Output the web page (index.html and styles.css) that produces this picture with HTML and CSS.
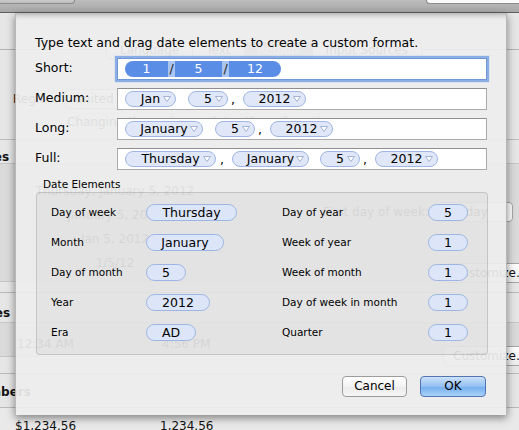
FILE: index.html
```html
<!DOCTYPE html>
<html>
<head>
<meta charset="utf-8">
<link rel="stylesheet" href="styles.css">
</head>
<body>
<div class="window">
  <div class="toolbar">
    <div class="tb-btn"></div>
    <div class="tb-search"></div>
  </div>
  <div class="pane">
    <div class="top">
      <div class="tabs">
        <span class="tab">Language</span><span class="tab">Text</span><span class="tab sel">Region</span><span class="tab">Input Sources</span>
      </div>
      <div class="region-row"><span>Region:</span><span class="popup">United States</span><span class="chk">Show all regions</span></div>
      <div class="note">Changing the region updates these formats.</div>
    </div>
    <div class="sec sec-dates">
      <div class="sec-title">Dates</div>
      <div class="sec-box dates-box">
        <div class="samples">
          <div>Thursday, January 5, 2012</div>
          <div>January 5, 2012</div>
          <div>Jan 5, 2012</div>
          <div>1/5/12</div>
        </div>
        <div class="side">
          <div class="fdw">First day of week: <span class="popup sm">Sunday</span></div>
          <div class="cbtn">Customize…</div>
        </div>
      </div>
    </div>
    <div class="sec sec-times">
      <div class="sec-title">Times</div>
      <div class="sec-box times-box">
        <span class="v1">12:34 AM</span><span class="v2">4:56 PM</span>
        <div class="cbtn cbtn2">Customize…</div>
      </div>
    </div>
    <div class="sec sec-numbers">
      <div class="sec-title">Numbers</div>
      <div class="sec-box num-box">
        <span class="n1">$1,234.56</span><span class="n2">1,234.56</span>
      </div>
    </div>
  </div>
</div>

<div class="sheet">
  <p class="intro">Type text and drag date elements to create a custom format.</p>
  <div class="formats">
    <span class="flabel">Short:</span>
    <div class="field focus">
      <div class="tokbar">
        <span class="seg s1">1</span><span class="slash">/</span><span class="seg s2">5</span><span class="slash">/</span><span class="seg s3">12</span>
      </div>
    </div>

    <span class="flabel">Medium:</span>
    <div class="field">
      <span class="tok w51">Jan<svg class="tri" viewBox="0 0 8 6"><path d="M0.5 0.5 H7.5 L4 5.5 Z"/></svg></span>
      <span class="sp"></span>
      <span class="tok w40">5<svg class="tri" viewBox="0 0 8 6"><path d="M0.5 0.5 H7.5 L4 5.5 Z"/></svg></span>
      <span class="cm">,</span>
      <span class="tok w63">2012<svg class="tri" viewBox="0 0 8 6"><path d="M0.5 0.5 H7.5 L4 5.5 Z"/></svg></span>
    </div>

    <span class="flabel">Long:</span>
    <div class="field">
      <span class="tok w78">January<svg class="tri" viewBox="0 0 8 6"><path d="M0.5 0.5 H7.5 L4 5.5 Z"/></svg></span>
      <span class="sp"></span>
      <span class="tok w40">5<svg class="tri" viewBox="0 0 8 6"><path d="M0.5 0.5 H7.5 L4 5.5 Z"/></svg></span>
      <span class="cm">,</span>
      <span class="tok w63">2012<svg class="tri" viewBox="0 0 8 6"><path d="M0.5 0.5 H7.5 L4 5.5 Z"/></svg></span>
    </div>

    <span class="flabel">Full:</span>
    <div class="field">
      <span class="tok w91">Thursday<svg class="tri" viewBox="0 0 8 6"><path d="M0.5 0.5 H7.5 L4 5.5 Z"/></svg></span>
      <span class="cm cm2">,</span>
      <span class="tok w77">January<svg class="tri" viewBox="0 0 8 6"><path d="M0.5 0.5 H7.5 L4 5.5 Z"/></svg></span>
      <span class="sp sp2"></span>
      <span class="tok w40">5<svg class="tri" viewBox="0 0 8 6"><path d="M0.5 0.5 H7.5 L4 5.5 Z"/></svg></span>
      <span class="cm">,</span>
      <span class="tok w63">2012<svg class="tri" viewBox="0 0 8 6"><path d="M0.5 0.5 H7.5 L4 5.5 Z"/></svg></span>
    </div>
  </div>

  <div class="group-label">Date Elements</div>
  <div class="group">
    <span class="elabel">Day of week</span><span class="cell"><span class="epill e91">Thursday</span></span>
    <span class="elabel">Day of year</span><span class="cell"><span class="epill e40">5</span></span>

    <span class="elabel">Month</span><span class="cell"><span class="epill e78">January</span></span>
    <span class="elabel">Week of year</span><span class="cell"><span class="epill e40">1</span></span>

    <span class="elabel">Day of month</span><span class="cell"><span class="epill e40">5</span></span>
    <span class="elabel">Week of month</span><span class="cell"><span class="epill e40">1</span></span>

    <span class="elabel">Year</span><span class="cell"><span class="epill e64">2012</span></span>
    <span class="elabel">Day of week in month</span><span class="cell"><span class="epill e40">1</span></span>

    <span class="elabel">Era</span><span class="cell"><span class="epill e50">AD</span></span>
    <span class="elabel">Quarter</span><span class="cell"><span class="epill e40">1</span></span>
  </div>

  <div class="buttons">
    <div class="btn cancel">Cancel</div>
    <div class="btn ok">OK</div>
  </div>
</div>
</body>
</html>
```

FILE: styles.css
```css
* { box-sizing: border-box; }
html, body { margin: 0; padding: 0; }
body {
  width: 519px;
  height: 430px;
  overflow: hidden;
  position: relative;
  background: #e6e6e6;
  font-family: "DejaVu Sans", "Lucida Grande", sans-serif;
  font-size: 12px;
  color: #111;
}

/* ---------- background window ---------- */
.window { width: 519px; height: 430px; overflow: hidden; }
.toolbar {
  height: 13px;
  background: linear-gradient(#bcbcbc, #a8a8a8);
  border-bottom: 1px solid #5e5e5e;
  display: flex;
  justify-content: space-between;
  align-items: flex-start;
}
.tb-btn {
  width: 77px; height: 4px; margin-left: -2px;
  border: 1px solid #8c8c8c; border-top: none;
  border-radius: 0 0 4px 4px;
  background: linear-gradient(#cacaca, #bdbdbd);
}
.tb-search {
  width: 93px; height: 4px;
  border: 1px solid #8c8c8c; border-top: none; border-right: none;
  border-radius: 0 0 0 6px;
  background: #fafafa;
}
.pane { margin-left: -30px; width: 580px; }

.top { height: 127px; padding-top: 29px; border-bottom: 1px solid #bdbdbd; }
.tabs {
  height: 17px;
  padding-left: 137px;
  display: flex;
  background: linear-gradient(to bottom, transparent 7px, #b4b4b4 7px, #b4b4b4 8px, transparent 8px);
}
.tab {
  height: 17px; line-height: 15px;
  padding: 0 13px;
  border: 1px solid #9f9f9f;
  margin-left: -1px;
  background: linear-gradient(#fdfdfd, #eaeaea);
}
.tab:first-child { border-radius: 4px 0 0 4px; }
.tab:last-child { border-radius: 0 4px 4px 0; }
.tab.sel { background: linear-gradient(#8f8f8f, #ababab); color: #fff; }
.region-row {
  margin-top: 29px;
  height: 21px;
  padding-left: 43px;
  display: flex;
  align-items: center;
  gap: 7px;
}
.popup {
  height: 20px; line-height: 18px;
  padding: 0 24px 0 8px;
  border: 1px solid #a5a5a5;
  border-radius: 4px;
  background: linear-gradient(#fefefe, #ececec);
}
.popup.sm { display: inline-block; }
.chk { margin-left: 14px; }
.note { margin-top: 6px; line-height: 15px; padding-left: 97px; }

.sec { border-bottom: 1px solid #b9b9b9; }
.sec-title { font-weight: bold; line-height: 16px; }
.sec-box { background: #dadada; border-top: 1px solid #c6c6c6; border-bottom: 1px solid #c6c6c6; display: flex; }

.sec-dates { height: 153px; }
.sec-dates .sec-title { height: 23px; padding-top: 9px; }
.dates-box { height: 119px; }
.samples { width: 230px; margin-left: 30px; padding-top: 15px; text-align: center; line-height: 24px; }
.side { margin-left: 93px; padding-top: 38px; display: flex; flex-direction: column; align-items: flex-start; }
.fdw { display: flex; align-items: center; gap: 5px; height: 20px; }
.fdw .popup { background: #fcfcfc; }
.cbtn {
  margin-top: 41px; margin-left: 120px;
  height: 20px; line-height: 18px;
  padding: 0 20px 0 9px;
  border: 1px solid #a5a5a5; border-radius: 4px;
  background: linear-gradient(#fefefe, #ededed);
  white-space: nowrap;
}

.sec-times { height: 81px; }
.sec-times .sec-title { height: 29px; padding-top: 12px; }
.times-box { height: 35px; padding-top: 13px; line-height: 16px; }
.v1 { margin-left: 47px; width: 145px; }
.v2 { width: 200px; }
.cbtn2 { margin-top: 10px; margin-left: 81px; align-self: flex-start; }

.sec-numbers { border-bottom: none; }
.sec-numbers .sec-title { height: 33px; padding-top: 10px; }
.num-box { background: #e9e9e9; border-bottom: none; border-top: 1px solid #b9b9b9; padding-top: 10px; line-height: 16px; height: 40px; }
.n1 { margin-left: 45px; width: 145px; }

/* ---------- sheet ---------- */
.sheet {
  position: absolute;
  left: 15px;
  top: 13px;
  width: 492px;
  height: 402px;
  padding: 22px 20px 0 19px;
  background: rgba(237, 237, 237, 0.93);
  border-left: 1px solid rgba(0, 0, 0, 0.22);
  border-right: 1px solid rgba(0, 0, 0, 0.22);
  box-shadow: 0 3px 8px rgba(0, 0, 0, 0.45), inset 0 7px 6px -6px rgba(0, 0, 0, 0.35);
  display: flex;
  flex-direction: column;
  color: #000;
}
.intro { margin: 0; line-height: 15px; font-size: 12.5px; white-space: nowrap; }

.formats {
  margin-top: 8px;
  display: grid;
  grid-template-columns: 82px 370px;
  grid-auto-rows: 22px;
  row-gap: 8px;
}
.flabel { font-size: 12.5px; line-height: 16px; align-self: start; padding-top: 2px; }
.field {
  height: 22px;
  background: #fff;
  border: 1px solid #ababab;
  border-top-color: #8f8f8f;
  display: flex;
  align-items: center;
  padding-left: 7px;
}
.field.focus {
  border-color: #6f98d4;
  box-shadow: 0 0 1px 2px rgba(104, 152, 226, 0.75);
}
.tokbar { display: flex; height: 16px; border-radius: 8px; overflow: hidden; font-size: 12.5px; line-height: 16px; }
.seg { background: #5a8de6; color: #fff; text-align: center; }
.s1 { width: 43px; }
.s2 { width: 47px; }
.s3 { width: 52px; }
.slash { width: 7px; background: #a9c4ef; color: #222; text-align: center; }

.tok {
  position: relative;
  height: 16px;
  line-height: 14px;
  border: 1px solid #a0b6e3;
  border-radius: 8px;
  background: #dfe7f8;
  font-size: 12.5px;
  text-align: center;
  flex: none;
}
.tri {
  position: absolute;
  right: 4px;
  top: 4px;
  width: 8px;
  height: 6px;
}
.tri path { fill: #fff; stroke: #a3b3d3; stroke-width: 1; stroke-linejoin: round; }
.w40 { width: 40px; }
.w51 { width: 51px; }
.w63 { width: 63px; }
.w77 { width: 77px; }
.w78 { width: 78px; }
.w91 { width: 91px; }
.sp { width: 12px; flex: none; }
.sp2 { width: 11px; }
.cm { width: 15px; flex: none; padding-left: 3px; font-size: 12.5px; line-height: 14px; padding-top: 2px; }
.cm2 { width: 16px; padding-left: 4px; }

.group-label { margin: 8px 0 0 8px; font-size: 10.5px; line-height: 13px; }
.group {
  margin-top: 1px;
  margin-left: 1px;
  width: 452px;
  height: 163px;
  border: 1px solid rgba(0, 0, 0, 0.14);
  border-radius: 4px;
  background: rgba(0, 0, 0, 0.035);
  padding: 4px 0 0 14px;
  display: grid;
  grid-template-columns: 95px 136px 146px 40px;
  grid-auto-rows: 30px;
  align-items: center;
}
.elabel { font-size: 10.5px; line-height: 13px; white-space: nowrap; }
.cell { display: flex; }
.epill {
  height: 17px;
  line-height: 15px;
  border: 1px solid #9db5e4;
  border-radius: 9px;
  background: #dde6f8;
  font-size: 12.5px;
  text-align: center;
}
.e40 { width: 40px; }
.e50 { width: 50px; }
.e64 { width: 64px; }
.e78 { width: 78px; }
.e91 { width: 91px; }

.buttons {
  margin-top: 21px;
  display: flex;
  justify-content: flex-end;
  gap: 13px;
}
.btn {
  height: 21px;
  line-height: 19px;
  border-radius: 4px;
  text-align: center;
  font-size: 12px;
}
.cancel {
  width: 65px;
  border: 1px solid #9c9c9c;
  background: linear-gradient(#ffffff, #f3f3f3 50%, #eaeaea 50%, #f6f6f6);
}
.ok {
  width: 66px;
  border: 1px solid #5374b2;
  background: linear-gradient(#cde2f9, #93c0f2 50%, #72acef 50%, #a9d1f8);
}
```
